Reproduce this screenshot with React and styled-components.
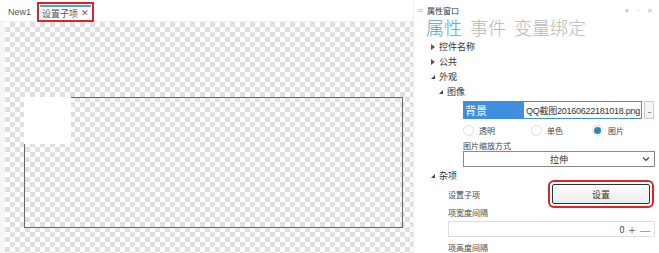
import React from 'react';
import styled, { createGlobalStyle } from 'styled-components';

const GlobalStyle = createGlobalStyle`
  html, body {
    margin: 0;
    padding: 0;
    background: #fff;
    overflow: hidden;
  }
  body {
    font-family: "Noto Sans CJK SC", "Liberation Sans", sans-serif;
    color: #333;
  }
`;

const Screen = styled.div`
  width: 659px;
  height: 253px;
  display: flex;
  overflow: hidden;
  background: #fff;
`;

const Designer = styled.div`
  width: 413px;
  display: flex;
  flex-direction: column;
  border-right: 1px solid #ececec;
`;

const TabBar = styled.div`
  height: 22px;
  flex-shrink: 0;
  display: flex;
  align-items: flex-start;
  padding-left: 8px;
  gap: 9px;
  border-bottom: 1px solid #f0f0f0;
  box-sizing: border-box;
`;

const DocTab = styled.div`
  font-family: "Liberation Sans", "Noto Sans CJK SC", sans-serif;
  font-size: 9px;
  height: 14px;
  margin-top: 5px;
  display: flex;
  align-items: center;
  color: #555;
  box-sizing: border-box;
  ${(p) =>
    p.$active &&
    `
    border-top: 2px solid #5b9fc7;
    padding: 0 2px;
    outline: 2px solid #d6262a;
    outline-offset: 1px;
  `}
`;

const Close = styled.span`
  margin-left: 3px;
  font-size: 9px;
  color: #666;
`;

const CanvasWrap = styled.div`
  flex: 1;
  display: flex;
  background: #f6f6f6;
`;

const Canvas = styled.div`
  flex: 1;
  margin-left: 5px;
  position: relative;
  background-color: #fff;
  background-image: conic-gradient(#dfdfdf 25%, #fff 0 50%, #dfdfdf 0 75%, #fff 0);
  background-size: 10px 10px;
`;

const Frame = styled.div`
  position: absolute;
  left: 19px;
  top: 75px;
  width: 379px;
  height: 131px;
  border: 1px solid #666;
  box-sizing: border-box;
`;

const WhiteBlock = styled.div`
  position: absolute;
  left: 19px;
  top: 75px;
  width: 47px;
  height: 47px;
  background: #fff;
`;

const Panel = styled.div`
  flex: 1;
  display: flex;
  flex-direction: column;
  padding-left: 4px;
  overflow: hidden;
  & > * {
    flex-shrink: 0;
  }
`;

const PanelHead = styled.div`
  height: 20px;
  display: flex;
  align-items: center;
  font-size: 8px;
  color: #333;
`;

const Grip = styled.svg`
  margin-right: 4px;
`;

const HeadTitle = styled.span`
  flex: 1;
`;

const HeadIcons = styled.span`
  color: #bbb;
  font-size: 7px;
  letter-spacing: 2px;
  padding-right: 4px;
`;

const BigTabs = styled.div`
  display: flex;
  gap: 8px;
  padding-left: 8px;
  height: 14px;
  align-items: center;
`;

const BigTab = styled.span`
  font-size: 18px;
  font-weight: 300;
  line-height: 1;
  color: ${(p) => (p.$active ? '#4ea3d3' : '#b8b8b8')};
`;

const Body = styled.div`
  display: flex;
  flex-direction: column;
  padding-left: 13px;
  padding-top: 5px;
  & > * {
    flex-shrink: 0;
  }
`;

const TreeRow = styled.div`
  height: 15px;
  display: flex;
  align-items: center;
  font-size: 9px;
  color: #333;
  padding-left: ${(p) => p.$indent || 0}px;
  margin-top: ${(p) => p.$gap || 0}px;
`;

const Arrow = styled.span`
  display: inline-block;
  width: 0;
  height: 0;
  margin-right: 4px;
  ${(p) =>
    p.$open
      ? `
    border-left: 4px solid transparent;
    border-bottom: 4px solid #444;
  `
      : `
    border-top: 3px solid transparent;
    border-bottom: 3px solid transparent;
    border-left: 4px solid #555;
  `}
`;

const Section = styled.div`
  display: flex;
  flex-direction: column;
  padding-left: ${(p) => p.$indent || 0}px;
  padding-right: 4px;
  & > * {
    flex-shrink: 0;
  }
`;

const ImageRow = styled.div`
  display: flex;
  height: 18px;
  margin-top: 2px;
  align-items: stretch;
`;

const ImageLabel = styled.div`
  width: 60px;
  background: #3f8fde;
  color: #fff;
  font-size: 11px;
  display: flex;
  align-items: center;
  padding-left: 2px;
  box-sizing: border-box;
`;

const ImageInput = styled.div`
  width: 119px;
  border: 1px solid #3f8fde;
  box-sizing: border-box;
  font-family: "Liberation Sans", "Noto Sans CJK SC", sans-serif;
  font-size: 9px;
  letter-spacing: -0.25px;
  display: flex;
  align-items: center;
  padding-left: 2px;
  color: #333;
  white-space: nowrap;
  overflow: hidden;
`;

const DotsBtn = styled.div`
  width: 10px;
  margin-left: 2px;
  border: 1px solid #ccc;
  box-sizing: border-box;
  font-size: 7px;
  display: flex;
  align-items: center;
  justify-content: center;
  color: #555;
  background: #f5f5f5;
  letter-spacing: -1px;
`;

const RadioRow = styled.div`
  display: flex;
  height: 18px;
  align-items: center;
  margin-top: 2px;
`;

const RadioItem = styled.label`
  width: ${(p) => p.$w}px;
  display: flex;
  align-items: center;
  font-size: 8px;
  color: #444;
`;

const RadioDot = styled.span`
  width: 11px;
  height: 11px;
  border-radius: 50%;
  border: 1px solid #ddd;
  box-sizing: border-box;
  margin-right: 5px;
  background: #fff;
  display: flex;
  align-items: center;
  justify-content: center;
  &::after {
    content: '';
    width: 7px;
    height: 7px;
    border-radius: 50%;
    background: ${(p) => (p.$on ? '#2a86b4' : 'transparent')};
  }
`;

const FieldLabel = styled.div`
  font-size: 8px;
  color: #444;
  height: ${(p) => p.$h || 12}px;
  display: flex;
  align-items: center;
`;

const Select = styled.div`
  height: 16px;
  border: 1px solid #888;
  box-sizing: border-box;
  display: flex;
  align-items: center;
  position: relative;
  justify-content: center;
  font-size: 9px;
  color: #333;
`;

const Chevron = styled.svg`
  position: absolute;
  right: 4px;
  top: 4px;
`;

const PropRow = styled.div`
  display: flex;
  align-items: center;
  height: 20px;
  margin-top: 1px;
`;

const PropName = styled.div`
  width: 104px;
  font-size: 8px;
  color: #444;
`;

const SetButton = styled.button`
  width: 98px;
  height: 20px;
  border: 1px solid #333;
  border-radius: 2px;
  background: linear-gradient(#fdfdfd, #ececec);
  font-family: inherit;
  font-size: 9px;
  color: #333;
  outline: 2px solid #d6262a;
  outline-offset: 2px;
  padding: 0;
`;

const NumberBox = styled.div`
  height: 16px;
  border: 1px solid #ddd;
  box-sizing: border-box;
  display: flex;
  align-items: center;
  justify-content: flex-end;
  font-size: 9px;
  color: #444;
  padding-right: 3px;
  gap: 4px;
`;

const Stepper = styled.span`
  color: #555;
  font-size: 13px;
  line-height: 1;
  font-weight: 300;
`;

export default function App() {
  return (
    <>
      <GlobalStyle />
      <Screen>
        <Designer>
          <TabBar>
            <DocTab>New1</DocTab>
            <DocTab $active>
              设置子项<Close>✕</Close>
            </DocTab>
          </TabBar>
          <CanvasWrap>
            <Canvas>
              <Frame />
              <WhiteBlock />
            </Canvas>
          </CanvasWrap>
        </Designer>
        <Panel>
          <PanelHead>
            <Grip width="5" height="5" viewBox="0 0 5 5">
              <path d="M0 1.5 H5 M0 3.5 H5" stroke="#bbb" strokeWidth="0.8" />
            </Grip>
            <HeadTitle>属性窗口</HeadTitle>
            <HeadIcons>▾ ▫ ✕</HeadIcons>
          </PanelHead>
          <BigTabs>
            <BigTab $active>属性</BigTab>
            <BigTab>事件</BigTab>
            <BigTab>变量绑定</BigTab>
          </BigTabs>
          <Body>
            <TreeRow>
              <Arrow />
              控件名称
            </TreeRow>
            <TreeRow>
              <Arrow />
              公共
            </TreeRow>
            <TreeRow>
              <Arrow $open />
              外观
            </TreeRow>
            <TreeRow $indent={8}>
              <Arrow $open />
              图像
            </TreeRow>
            <Section $indent={32}>
              <ImageRow>
                <ImageLabel>背景</ImageLabel>
                <ImageInput>QQ截图20160622181018.png</ImageInput>
                <DotsBtn>...</DotsBtn>
              </ImageRow>
              <RadioRow>
                <RadioItem $w={68}>
                  <RadioDot />
                  透明
                </RadioItem>
                <RadioItem $w={61}>
                  <RadioDot />
                  单色
                </RadioItem>
                <RadioItem $w={60}>
                  <RadioDot $on />
                  图片
                </RadioItem>
              </RadioRow>
              <FieldLabel $h={12}>图片缩放方式</FieldLabel>
              <Select>
                拉伸
                <Chevron width="8" height="6" viewBox="0 0 8 6">
                  <path d="M1 1.5 L4 4.5 L7 1.5" fill="none" stroke="#444" strokeWidth="1.2" />
                </Chevron>
              </Select>
            </Section>
            <TreeRow $gap={1}>
              <Arrow $open />
              杂项
            </TreeRow>
            <Section $indent={17}>
              <PropRow>
                <PropName>设置子项</PropName>
                <SetButton>设置</SetButton>
              </PropRow>
              <FieldLabel $h={17}>项宽度间隔</FieldLabel>
              <NumberBox>
                0<Stepper>+</Stepper>
                <Stepper>—</Stepper>
              </NumberBox>
              <FieldLabel $h={21}>项高度间隔</FieldLabel>
            </Section>
          </Body>
        </Panel>
      </Screen>
    </>
  );
}
